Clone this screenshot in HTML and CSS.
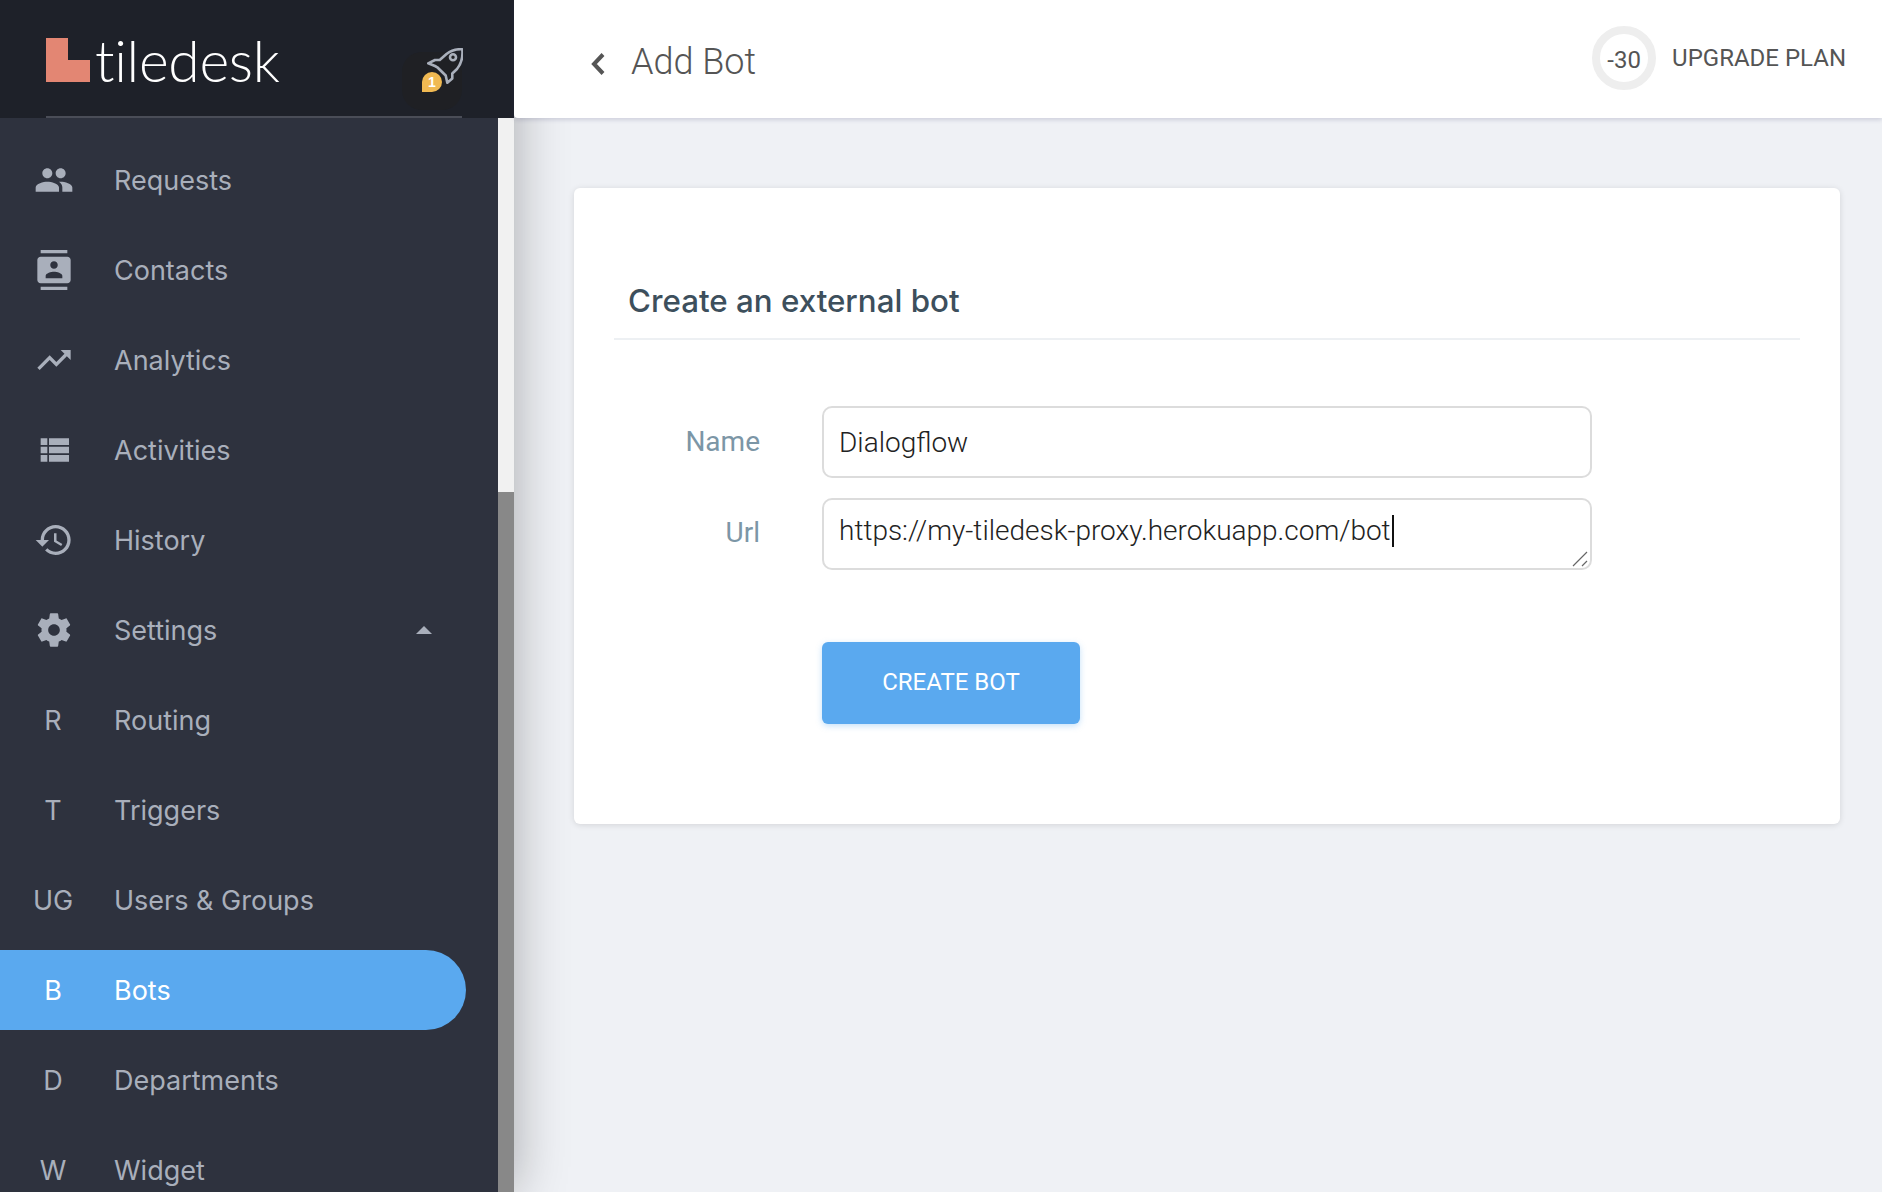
FILE: index.html
```html
<!DOCTYPE html>
<html lang="en">
<head>
   <meta charset="UTF-8" />
   <title>Add Bot</title>
   <link rel="stylesheet" href="styles.css">
</head>
<body>

   <aside class="sidebar">
      <div class="brand">
         <div class="brand-row">
            <svg class="brand-mark" viewBox="0 0 44 44"><path d="M0 0h22v22h22v22H0z"/></svg>
            <span class="brand-name">tiledesk</span>
         </div>
         <div class="rocket-wrap">
            <svg class="rocket" viewBox="0 0 36 36" fill="none" stroke="#a9afbb" stroke-width="2.600" stroke-linejoin="round">
               <path d="M35.300 1.300C29 .8 24 2.500 19.500 6l-6.800 6H8l-6.800 3.300L8 18l2.300 1.300 8.400 8.200 1.600 7.200 5-4.200v-5l4.700-4.500c4-5 6-13 5.300-19.700z"/>
               <circle cx="26" cy="9.300" r="3"/>
            </svg>
            <span class="rocket-badge">1</span>
         </div>
      </div>
      <div class="sidebar-body">
         <nav class="nav">
            <a class="nav-item">
               <span class="nav-icon"><svg viewBox="0 0 24 24"><path d="M16 11c1.660 0 2.990-1.340 2.990-3S17.660 5 16 5c-1.660 0-3 1.340-3 3s1.340 3 3 3zm-8 0c1.660 0 2.990-1.340 2.990-3S9.660 5 8 5C6.340 5 5 6.340 5 8s1.340 3 3 3zm0 2c-2.330 0-7 1.170-7 3.500V19h14v-2.500c0-2.330-4.670-3.500-7-3.500zm8 0c-.29 0-.62.02-.97.05 1.160.84 1.970 1.970 1.970 3.450V19h6v-2.500c0-2.330-4.670-3.500-7-3.500z"/></svg></span>
               Requests
            </a>
            <a class="nav-item">
               <span class="nav-icon"><svg viewBox="0 0 24 24"><path d="M20 0H4v2h16V0zM4 24h16v-2H4v2zM20 4H4c-1.100 0-2 .9-2 2v12c0 1.100.9 2 2 2h16c1.100 0 2-.9 2-2V6c0-1.100-.9-2-2-2zm-8 2.750c1.240 0 2.250 1.010 2.250 2.250s-1.010 2.250-2.250 2.250S9.750 10.240 9.750 9 10.760 6.750 12 6.750zM17 17H7v-1.500c0-1.670 3.330-2.500 5-2.500s5 .83 5 2.500V17z"/></svg></span>
               Contacts
            </a>
            <a class="nav-item">
               <span class="nav-icon"><svg viewBox="0 0 24 24"><path d="M16 6l2.290 2.290-4.880 4.880-4-4L2 16.590 3.410 18l6-6 4 4 6.300-6.290L22 12V6z"/></svg></span>
               Analytics
            </a>
            <a class="nav-item">
               <span class="nav-icon"><svg viewBox="0 0 24 24"><path d="M4 14h4v-4H4v4zm0 5h4v-4H4v4zM4 9h4V5H4v4zm5 5h12v-4H9v4zm0 5h12v-4H9v4zM9 5v4h12V5H9z"/></svg></span>
               Activities
            </a>
            <a class="nav-item">
               <span class="nav-icon"><svg viewBox="0 0 24 24"><path d="M13 3c-4.970 0-9 4.030-9 9H1l3.890 3.890.07.14L9 12H6c0-3.870 3.130-7 7-7s7 3.130 7 7-3.130 7-7 7c-1.930 0-3.680-.79-4.940-2.060l-1.420 1.420C8.270 19.990 10.510 21 13 21c4.970 0 9-4.030 9-9s-4.030-9-9-9zm-1 5v5l4.280 2.540.72-1.210-3.500-2.080V8H12z"/></svg></span>
               History
            </a>
            <a class="nav-item">
               <span class="nav-icon"><svg viewBox="0 0 24 24"><path d="M19.430 12.980c.04-.32.07-.64.07-.98s-.03-.66-.07-.98l2.110-1.650c.19-.15.24-.42.12-.64l-2-3.460c-.12-.22-.39-.3-.61-.22l-2.490 1c-.52-.4-1.080-.73-1.690-.98l-.38-2.650C14.460 2.180 14.250 2 14 2h-4c-.25 0-.46.18-.49.42l-.38 2.650c-.61.25-1.170.59-1.690.98l-2.490-1c-.23-.09-.49 0-.61.22l-2 3.460c-.13.22-.07.49.12.64l2.110 1.650c-.04.32-.07.65-.07.98s.03.66.07.98l-2.110 1.650c-.19.15-.24.42-.12.64l2 3.460c.12.22.39.3.61.22l2.490-1c.52.4 1.080.73 1.690.98l.38 2.650c.03.24.24.42.49.42h4c.25 0 .46-.18.49-.42l.38-2.650c.61-.25 1.170-.59 1.690-.98l2.490 1c.23.09.49 0 .61-.22l2-3.460c.12-.22.07-.49-.12-.64l-2.110-1.650zM12 15.500c-1.930 0-3.500-1.570-3.500-3.500s1.570-3.500 3.500-3.500 3.500 1.570 3.500 3.500-1.570 3.500-3.500 3.500z"/></svg></span>
               Settings
               <span class="nav-caret"></span>
            </a>
            <a class="nav-item"><span class="nav-icon">R</span>Routing</a>
            <a class="nav-item"><span class="nav-icon">T</span>Triggers</a>
            <a class="nav-item"><span class="nav-icon">UG</span>Users &amp; Groups</a>
            <a class="nav-item active"><span class="nav-icon">B</span>Bots</a>
            <a class="nav-item"><span class="nav-icon">D</span>Departments</a>
            <a class="nav-item"><span class="nav-icon">W</span>Widget</a>
         </nav>
         <div class="side-scroll"><div class="side-thumb"></div></div>
      </div>
   </aside>

   <div class="page">
      <header class="topbar">
         <div class="topbar-title">
            <svg class="back" viewBox="0 0 16 24" fill="none" stroke="#555" stroke-width="4"><path d="M13 2.500L4 12l9 9.500"/></svg>
            <span>Add Bot</span>
         </div>
         <div class="plan">
            <span class="plan-ring">-30</span>
            <span class="plan-link">UPGRADE PLAN</span>
         </div>
      </header>

      <main class="content">
         <section class="card">
            <h3 class="card-title">Create an external bot</h3>
            <div class="form-row">
               <label class="form-label">Name</label>
               <div class="field">Dialogflow</div>
            </div>
            <div class="form-row">
               <label class="form-label url-label">Url</label>
               <div class="field field-area">https://my-tiledesk-proxy.herokuapp.com/bot<span class="caret"></span>
                  <svg class="grip" viewBox="0 0 16 16" stroke="#666" stroke-width="1.200"><path d="M1 15L15 1M10 15l5-5"/></svg>
               </div>
            </div>
            <button class="create-btn">CREATE BOT</button>
         </section>
      </main>
   </div>

</body>
</html>
```

FILE: styles.css
```css
* {
   margin: 0;
   padding: 0;
   box-sizing: border-box;
}
html, body {
   height: 1192px;
   overflow: hidden;
}
body {
   display: flex;
   font-family: Roboto, sans-serif;
   background-color: #eff1f5;
}

/* sidebar */
.sidebar {
   width: 514px;
   flex-shrink: 0;
   display: flex;
   flex-direction: column;
   box-shadow: 0 0 50px rgba(0, 0, 0, 0.3);
   z-index: 1;
}
.brand {
   height: 118px;
   flex-shrink: 0;
   padding: 38px 52px 0 46px;
   background-color: #1e2129;
   display: flex;
   justify-content: space-between;
   position: relative;
}
.brand::after {
   content: "";
   position: absolute;
   left: 46px;
   right: 52px;
   bottom: 0;
   height: 2px;
   background-color: #4a4d57;
}
.brand-row {
   display: flex;
   align-items: flex-start;
   gap: 5px;
}
.brand-mark {
   width: 44px;
   height: 44px;
   fill: #e38673;
}
.brand-name {
   font-family: Lato, sans-serif;
   font-weight: 300;
   font-size: 57px;
   line-height: 44px;
   letter-spacing: -0.300px;
   color: #fff;
}
.rocket-wrap {
   position: relative;
   width: 60px;
   height: 58px;
   margin-top: 14px;
   background-color: #1f2024;
   border-radius: 20px;
}
.rocket {
   position: absolute;
   right: -1px;
   top: -4px;
   width: 36px;
   height: 36px;
}
.rocket-badge {
   position: absolute;
   left: 20px;
   top: 20px;
   width: 20px;
   height: 20px;
   border-radius: 10px 10px 10px 0;
   background-color: #f0b952;
   color: #fff;
   font-size: 14px;
   font-weight: 700;
   line-height: 20px;
   text-align: center;
   font-family: "Liberation Sans", sans-serif;
}
.sidebar-body {
   flex: 1;
   min-height: 0;
   display: flex;
   background-color: #2e323e;
}
.nav {
   flex: 1;
   min-width: 0;
   padding: 22px 32px 0 0;
   display: flex;
   flex-direction: column;
   gap: 10px;
}
.nav-item {
   height: 80px;
   flex-shrink: 0;
   display: flex;
   align-items: center;
   font-family: Inter, sans-serif;
   font-size: 27px;
   color: #a9afbb;
   border-radius: 0 40px 40px 0;
}
.nav-item.active {
   background-color: #5aa9ef;
   color: #fff;
}
.nav-icon {
   width: 114px;
   padding-right: 8px;
   flex-shrink: 0;
   display: flex;
   justify-content: center;
}
.nav-icon svg {
   width: 40px;
   height: 40px;
   margin-left: 2px;
   fill: #a9afbb;
}
.nav-caret {
   margin-left: auto;
   margin-right: 34px;
   border-left: 8px solid transparent;
   border-right: 8px solid transparent;
   border-bottom: 8px solid #a9afbb;
}
.side-scroll {
   width: 16px;
   flex-shrink: 0;
   display: flex;
   padding-top: 374px;
   background-color: #f1f1f1;
}
.side-thumb {
   flex: 1;
   background-color: #888;
}

/* top bar */
.page {
   flex: 1;
   min-width: 0;
   display: flex;
   flex-direction: column;
}
.topbar {
   height: 118px;
   flex-shrink: 0;
   display: flex;
   justify-content: space-between;
   align-items: center;
   padding: 0 36px 0 76px;
   background-color: #fff;
   box-shadow: 0 2px 4px rgba(60, 60, 110, 0.18);
   z-index: 2;
   border-bottom-left-radius: 4px;
}
.topbar-title {
   display: flex;
   align-items: center;
   gap: 25px;
   font-weight: 300;
   font-size: 36px;
   color: #555;
   padding-top: 6px;
}
.back {
   width: 16px;
   height: 24px;
   margin-top: 3px;
}
.plan {
   display: flex;
   align-items: center;
   gap: 16px;
   margin-bottom: 2px;
}
.plan-ring {
   width: 64px;
   height: 64px;
   border: 8px solid #eee;
   border-radius: 50%;
   display: flex;
   align-items: center;
   justify-content: center;
   font-size: 24px;
   color: #555;
   padding-top: 3px;
}
.plan-link {
   font-size: 24px;
   color: #555;
}

/* card */
.content {
   flex: 1;
   padding: 70px 42px 0 60px;
}
.card {
   height: 636px;
   background-color: #fff;
   border-radius: 6px;
   box-shadow: 0 1px 6px rgba(0, 0, 0, 0.12);
   padding: 90px 40px 0;
}
.card-title {
   height: 62px;
   padding-left: 14px;
   border-bottom: 2px solid #edf0f3;
   font-family: Inter, sans-serif;
   font-weight: 500;
   font-size: 31.300px;
   line-height: 46px;
   color: #3d4f5c;
   margin-bottom: 66px;
}
.form-row {
   display: flex;
   align-items: flex-start;
   gap: 62px;
   margin-bottom: 20px;
}
.form-label {
   width: 146px;
   text-align: right;
   font-size: 28px;
   line-height: 71px;
   color: #7c96a6;
}
.url-label {
   line-height: 69px;
}
.field {
   position: relative;
   width: 770px;
   height: 72px;
   border: 2px solid #dcdcdc;
   border-radius: 10px;
   padding: 0 15px;
   font-weight: 300;
   font-size: 28px;
   line-height: 69px;
   color: #222;
   background-color: #fff;
}
.field-area {
   line-height: 62px;
}
.caret {
   display: inline-block;
   width: 2px;
   height: 32px;
   margin-left: 1px;
   vertical-align: -7px;
   background-color: #111;
}
.grip {
   position: absolute;
   right: 2px;
   bottom: 1px;
   width: 16px;
   height: 16px;
}
.create-btn {
   display: block;
   width: 258px;
   height: 82px;
   margin: 72px 0 0 208px;
   padding-bottom: 2px;
   border: none;
   border-radius: 6px;
   background-color: #5aa9ef;
   color: #fff;
   font-family: Roboto, sans-serif;
   font-size: 24px;
   box-shadow: 0 2px 6px rgba(90, 169, 239, 0.35);
}
```
